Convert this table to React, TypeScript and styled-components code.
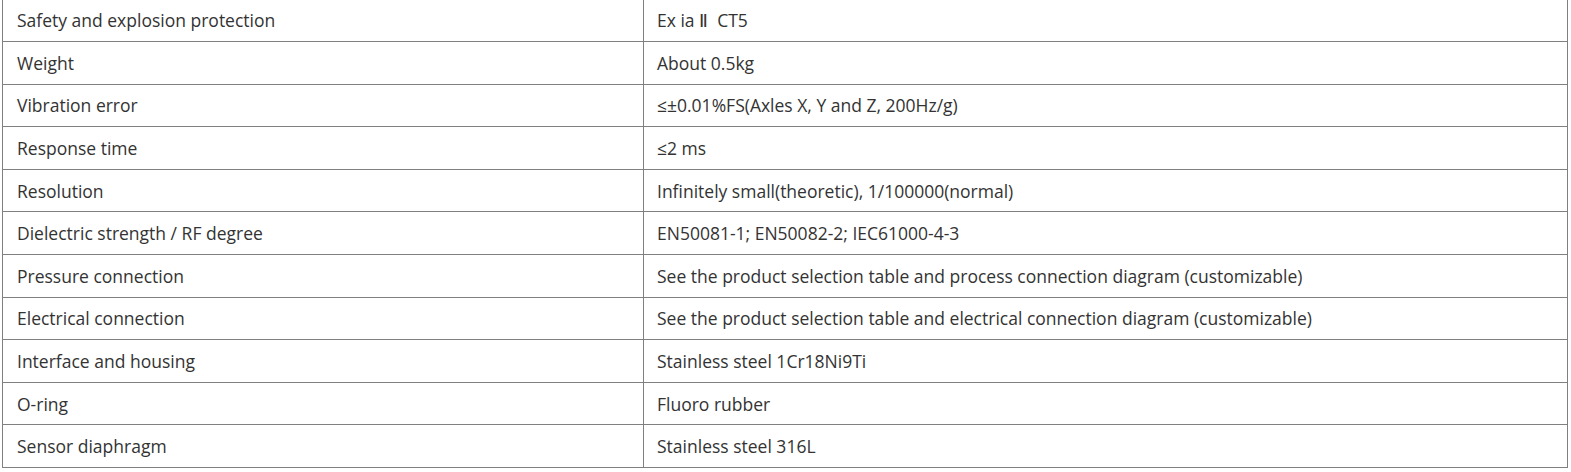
import React from "react";
import styled, { createGlobalStyle } from "styled-components";

const Global = createGlobalStyle`
  html, body { margin: 0; padding: 0; background: #fff; }
  body { font-family: "Open Sans", "Liberation Sans", sans-serif; overflow: hidden; }
`;

const Table = styled.div`
  margin: -1.6px 0 0 2px;
  width: 1566px;
  box-sizing: border-box;
  border: 1px solid #808080;
  border-bottom: none;
  display: flex;
  flex-direction: column;
`;

const Row = styled.div`
  display: grid;
  grid-template-columns: 641px 1fr;
  height: 42.6px;
  box-sizing: border-box;
  border-bottom: 1px solid #808080;
`;

const Cell = styled.div<{ $first?: boolean }>`
  display: flex;
  align-items: center;
  padding-left: ${(p) => (p.$first ? "14px" : "13px")};
  box-sizing: border-box;
  border-right: ${(p) => (p.$first ? "1px solid #808080" : "none")};
  font-size: 17.5px;
  color: #333;
  white-space: pre;
`;

const rows: [string, string][] = [
  ["Safety and explosion protection", "Ex ia \u2161  CT5"],
  ["Weight", "About 0.5kg"],
  ["Vibration error", "≤±0.01%FS(Axles X, Y and Z, 200Hz/g)"],
  ["Response time", "≤2 ms"],
  ["Resolution", "Infinitely small(theoretic), 1/100000(normal)"],
  ["Dielectric strength / RF degree", "EN50081-1; EN50082-2; IEC61000-4-3"],
  ["Pressure connection", "See the product selection table and process connection diagram (customizable)"],
  ["Electrical connection", "See the product selection table and electrical connection diagram (customizable)"],
  ["Interface and housing", "Stainless steel 1Cr18Ni9Ti"],
  ["O-ring", "Fluoro rubber"],
  ["Sensor diaphragm", "Stainless steel 316L"],
];

export default function App() {
  return (
    <>
      <Global />
      <Table>
        {rows.map(([k, v]) => (
          <Row key={k}>
            <Cell $first>{k}</Cell>
            <Cell>{v}</Cell>
          </Row>
        ))}
      </Table>
    </>
  );
}
